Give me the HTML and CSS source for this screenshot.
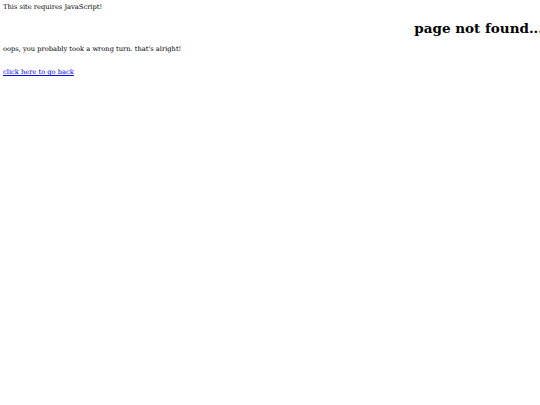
FILE: index.html
```html
<!DOCTYPE html>
<html>
<head>
<meta charset="utf-8">
<link rel="stylesheet" href="styles.css">
</head>
<body>
<div class="noscript">This site requires JavaScript!</div>
<h1 class="title">page not found...</h1>
<p class="msg">oops, you probably took a wrong turn. that's alright!</p>
<p class="back"><a href="#">click here to go back</a></p>
</body>
</html>
```
FILE: styles.css
```css
html, body { margin: 0; padding: 0; background: #fff; }
body {
  font-family: "DejaVu Serif", serif;
  font-size: 6.7px;
  color: #000;
  padding: 3px;
  overflow: hidden;
  width: 540px;
  box-sizing: border-box;
}
.noscript { line-height: 9px; }
.title {
  font-size: 13.5px;
  font-weight: bold;
  text-align: right;
  margin: 7px -6px 0 0;
  line-height: 18px;
  white-space: nowrap;
}
.msg { margin: 7px 0 0 0; line-height: 10px; }
.back { margin: 13px 0 0 0; line-height: 10px; }
.back a { color: #00e; }
```
